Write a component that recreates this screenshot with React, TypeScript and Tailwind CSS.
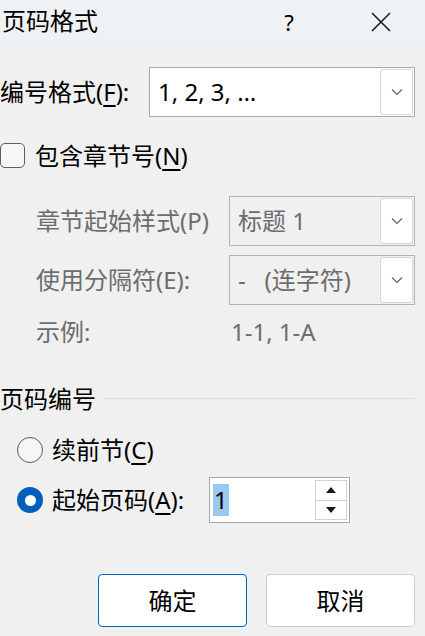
import React from "react";

const font = "font-['Noto_Sans','Noto_Sans_CJK_SC',sans-serif]";

const Chevron = () => (
  <svg width="12" height="8" viewBox="0 0 12 8" fill="none">
    <path d="M1 1.5 L6 6.5 L11 1.5" stroke="#5c5c5c" strokeWidth="1.1" />
  </svg>
);

const Combo: React.FC<{ value: string; width: string; disabled?: boolean }> = ({
  value,
  width,
  disabled,
}) => (
  <div
    className={`${width} h-[50px] flex items-stretch border ${
      disabled ? "border-[#b4b4b4] bg-[#f0f0f0] text-[#6d6d6d]" : "border-[#a8a8a8] bg-white text-black"
    }`}
  >
    <div className="flex-1 flex items-center pl-[8px] text-[24px] whitespace-pre">{value}</div>
    <div className="my-[1px] mr-[1px] w-[33px] bg-white border border-[#d6d6d6] rounded-[3px] flex items-center justify-center">
      <Chevron />
    </div>
  </div>
);

const U: React.FC<{ children: React.ReactNode }> = ({ children }) => (
  <span className="underline underline-offset-[4px] decoration-[1.5px]">{children}</span>
);

export default function App() {
  return (
    <div className={`w-[425px] h-[636px] bg-[#f0f0f0] flex flex-col ${font} text-black`}>
      {/* title bar */}
      <div className="h-[44px] bg-[#eef2f5] flex items-center">
        <div className="pl-[2px] text-[24px] flex-1 leading-none -mt-[2px]">页码格式</div>
        <div className="text-[22px] w-[20px] text-center mr-[72px] leading-none">?</div>
        <svg width="20" height="20" viewBox="0 0 20 20" className="mr-[34px]">
          <path d="M1 1 L19 19 M19 1 L1 19" stroke="#1a1a1a" strokeWidth="1.6" />
        </svg>
      </div>

      {/* number format */}
      <div className="mt-[23px] flex items-center pr-[10px]">
        <div className="w-[149px] text-[24px]">
          编号格式(<U>F</U>):
        </div>
        <Combo value="1, 2, 3, …" width="w-[266px]" />
      </div>

      {/* include chapter */}
      <div className="mt-[26px] flex items-center gap-[10px]">
        <div className="w-[25px] h-[25px] rounded-[5px] border-[1.5px] border-[#5c5c5c] bg-[#f6f6f6]" />
        <div className="text-[24px] leading-none">
          包含章节号(<U>N</U>)
        </div>
      </div>

      <div className="mt-[28px] flex items-center pl-[36px] pr-[10px] text-[#6d6d6d]">
        <div className="w-[193px] text-[24px]">章节起始样式(P)</div>
        <Combo value="标题 1" width="w-[186px]" disabled />
      </div>

      <div className="mt-[9px] flex items-center pl-[36px] pr-[10px] text-[#6d6d6d]">
        <div className="w-[193px] text-[24px]">使用分隔符(E):</div>
        <Combo value="-   (连字符)" width="w-[186px]" disabled />
      </div>

      <div className="mt-[13px] h-[28px] flex items-center pl-[36px] text-[#6d6d6d] text-[24px]">
        <div className="w-[195px]">示例:</div>
        <div>1-1, 1-A</div>
      </div>

      {/* page numbering */}
      <div className="mt-[39px] h-[28px] flex items-center pr-[10px]">
        <div className="text-[24px] pr-[8px]">页码编号</div>
        <div className="flex-1 h-px bg-[#dcdcdc] -mt-[2px]" />
      </div>

      <div className="mt-[22px] h-[30px] flex items-center pl-[17px] gap-[9px]">
        <div className="w-[26px] h-[26px] rounded-full border-[1.5px] border-[#5c5c5c] bg-[#f6f6f6]" />
        <div className="text-[24px]">
          续前节(<U>C</U>)
        </div>
      </div>

      <div className="mt-[12px] h-[46px] flex items-center pl-[17px]">
        <div className="w-[26px] h-[26px] rounded-full bg-[#005fb8] flex items-center justify-center">
          <div className="w-[11px] h-[11px] rounded-full bg-white" />
        </div>
        <div className="text-[24px] ml-[9px] w-[157px]">
          起始页码(<U>A</U>):
        </div>
        <div className="w-[141px] h-[46px] border border-[#a8a8a8] bg-white flex items-stretch">
          <div className="flex-1 flex items-center pl-[3px]">
            <span className="bg-[#99c9ef] text-[24px] leading-[32px] px-[1px]">1</span>
          </div>
          <div className="w-[32px] my-[2px] mr-[2px] flex flex-col">
            <div className="flex-1 border border-[#d0d0d0] bg-white flex items-center justify-center">
              <svg width="10" height="6" viewBox="0 0 10 6">
                <path d="M0 6 L5 0 L10 6 Z" fill="#1a1a1a" />
              </svg>
            </div>
            <div className="flex-1 border border-t-0 border-[#d0d0d0] bg-white flex items-center justify-center">
              <svg width="10" height="6" viewBox="0 0 10 6">
                <path d="M0 0 L5 6 L10 0 Z" fill="#1a1a1a" />
              </svg>
            </div>
          </div>
        </div>
      </div>

      {/* buttons */}
      <div className="mt-[51px] flex justify-end gap-[19px] pr-[10px]">
        <button className="w-[149px] h-[53px] rounded-[4px] border border-[#0067c0] bg-white text-[24px]">
          确定
        </button>
        <button className="w-[149px] h-[53px] rounded-[4px] border border-[#cfcfcf] bg-white text-[24px]">
          取消
        </button>
      </div>
    </div>
  );
}
